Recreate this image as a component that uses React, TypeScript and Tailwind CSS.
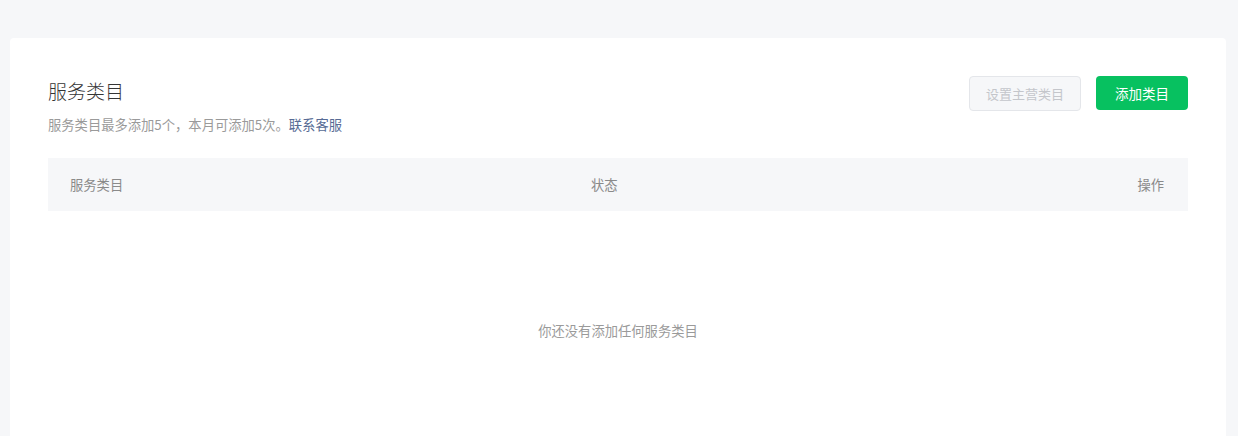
export default function App() {
  return (
    <div
      className="h-[436px] overflow-hidden bg-[#f6f7f9] pl-[10px] pr-[12px] pt-[38px]"
      style={{ fontFamily: '"Noto Sans CJK SC", "Noto Sans", sans-serif' }}
    >
      <div className="h-[398px] rounded-t-[4px] bg-white px-[38px] pt-[38px]">
        {/* Header */}
        <div className="flex items-start justify-between">
          <div className="pt-[2px]">
            <h2 className="text-[19px] font-light leading-[26px] text-[#353535]">服务类目</h2>
            <p className="mt-[11px] text-[13.3px] leading-[20px] text-[#9a9a9a]">
              服务类目最多添加5个，本月可添加5次。
              <a className="text-[#576b95]">联系客服</a>
            </p>
          </div>
          <div className="flex gap-[15px]">
            <button
              disabled
              className="h-[35px] w-[112px] rounded-[4px] border border-[#e4e6ea] bg-[#f6f7f9] text-[13px] text-[#c4c6cb]"
            >
              设置主营类目
            </button>
            <button className="h-[34px] w-[92px] rounded-[4px] bg-[#07c160] text-[13.5px] text-white">
              添加类目
            </button>
          </div>
        </div>

        {/* Table */}
        <div className="mt-[23px]">
          <div className="grid h-[53px] grid-cols-[521px_1fr_auto] items-center bg-[#f6f7f9] pl-[22px] pr-[24px] text-[13.3px] text-[#8a8a8a]">
            <span>服务类目</span>
            <span>状态</span>
            <span>操作</span>
          </div>
          <div className="py-[110px] text-center text-[13.3px] leading-[20px] text-[#9a9a9a]">
            你还没有添加任何服务类目
          </div>
        </div>
      </div>
    </div>
  );
}
